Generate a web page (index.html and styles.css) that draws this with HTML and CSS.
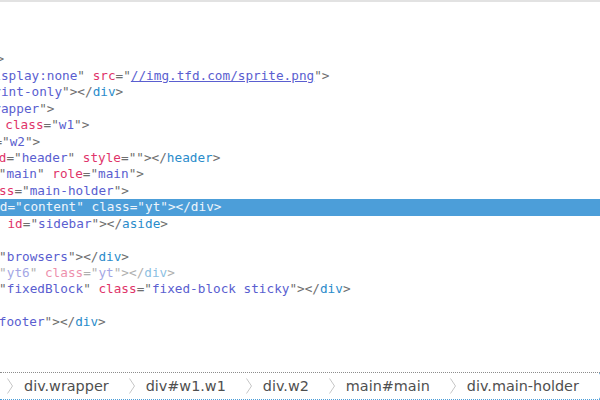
FILE: index.html
```html
<!DOCTYPE html>
<html lang="en">
<head>
    <meta charset="UTF-8">
    <meta name="viewport" content="width=device-width, initial-scale=1.0">
    <title>Inspector</title>
    <link rel="stylesheet" href="styles.css">
</head>
<body>
    <div class="inspector">
        <!-- Cây markup (đã cuộn ngang) -->
        <div class="markup">
            <div class="tree">
                <div class="line l0">&lt;!<span class="tg">DOCTYPE</span> html&gt;</div>
                <div class="line l0">&lt;<span class="tg">html</span>&gt;</div>
                <div class="line l1">&lt;<span class="tg">head</span>&gt;</div>
                <div class="line l1">&lt;<span class="tg">body</span> <span class="an">class</span>="<span class="av">x</span>"&gt;</div>
                <div class="line l2">&lt;<span class="tg">img</span> <span class="an">style</span>="<span class="av">display:none</span>" <span class="an">src</span>="<span class="av link">//img.tfd.com/sprite.png</span>"&gt;</div>
                <div class="line l2">&lt;<span class="tg">div</span> <span class="an">class</span>="<span class="av">print-only</span>"&gt;&lt;/<span class="tg">div</span>&gt;</div>
                <div class="line l2">&lt;<span class="tg">div</span> <span class="an">class</span>="<span class="av">wrapper</span>"&gt;</div>
                <div class="line l3">&lt;<span class="tg">div</span> <span class="an">id</span>="<span class="av">w1</span>" <span class="an">class</span>="<span class="av">w1</span>"&gt;</div>
                <div class="line l4">&lt;<span class="tg">div</span> <span class="an">class</span>="<span class="av">w2</span>"&gt;</div>
                <div class="line l5">&lt;<span class="tg">header</span> <span class="an">id</span>="<span class="av">header</span>" <span class="an">style</span>=""&gt;&lt;/<span class="tg">header</span>&gt;</div>
                <div class="line l5">&lt;<span class="tg">main</span> <span class="an">id</span>="<span class="av">main</span>" <span class="an">role</span>="<span class="av">main</span>"&gt;</div>
                <div class="line l6">&lt;<span class="tg">div</span> <span class="an">class</span>="<span class="av">main-holder</span>"&gt;</div>
                <div class="line l7 selected">&lt;<span class="tg">div</span> <span class="an">id</span>="<span class="av">content</span>" <span class="an">class</span>="<span class="av">yt</span>"&gt;&lt;/<span class="tg">div</span>&gt;</div>
                <div class="line l7">&lt;<span class="tg">aside</span> <span class="an">id</span>="<span class="av">sidebar</span>"&gt;&lt;/<span class="tg">aside</span>&gt;</div>
                <div class="line l6">&lt;/<span class="tg">div</span>&gt;</div>
                <div class="line l6">&lt;<span class="tg">div</span> <span class="an">id</span>="<span class="av">browsers</span>"&gt;&lt;/<span class="tg">div</span>&gt;</div>
                <div class="line l6 hidden-node">&lt;<span class="tg">div</span> <span class="an">id</span>="<span class="av">yt6</span>" <span class="an">class</span>="<span class="av">yt</span>"&gt;&lt;/<span class="tg">div</span>&gt;</div>
                <div class="line l6">&lt;<span class="tg">div</span> <span class="an">id</span>="<span class="av">fixedBlock</span>" <span class="an">class</span>="<span class="av">fixed-block sticky</span>"&gt;&lt;/<span class="tg">div</span>&gt;</div>
                <div class="line l5">&lt;/<span class="tg">main</span>&gt;</div>
                <div class="line l5">&lt;<span class="tg">div</span> <span class="an">id</span>="<span class="av">footer</span>"&gt;&lt;/<span class="tg">div</span>&gt;</div>
            </div>
        </div>
        <!-- Thanh breadcrumbs dưới cùng -->
        <nav class="crumbs">
            <div class="crumb">
                <svg class="sep" width="6" height="16" viewBox="0 0 6 16"><polyline points="0.5,0.5 5.5,8 0.5,15.5" fill="none" stroke="#c6c6c6" stroke-width="1"/></svg>
                <span>div.wrapper</span>
            </div>
            <div class="crumb">
                <svg class="sep" width="6" height="16" viewBox="0 0 6 16"><polyline points="0.5,0.5 5.5,8 0.5,15.5" fill="none" stroke="#c6c6c6" stroke-width="1"/></svg>
                <span>div#w1.w1</span>
            </div>
            <div class="crumb">
                <svg class="sep" width="6" height="16" viewBox="0 0 6 16"><polyline points="0.5,0.5 5.5,8 0.5,15.5" fill="none" stroke="#c6c6c6" stroke-width="1"/></svg>
                <span>div.w2</span>
            </div>
            <div class="crumb">
                <svg class="sep" width="6" height="16" viewBox="0 0 6 16"><polyline points="0.5,0.5 5.5,8 0.5,15.5" fill="none" stroke="#c6c6c6" stroke-width="1"/></svg>
                <span>main#main</span>
            </div>
            <div class="crumb">
                <svg class="sep" width="6" height="16" viewBox="0 0 6 16"><polyline points="0.5,0.5 5.5,8 0.5,15.5" fill="none" stroke="#c6c6c6" stroke-width="1"/></svg>
                <span>div.main-holder</span>
            </div>
            <div class="crumb current">
                <svg width="40" height="26" viewBox="0 0 40 26"><polygon points="0,0 40,0 40,26 0,26 7,13" fill="#4c9ed9"/></svg>
            </div>
        </nav>
    </div>
</body>
</html>
```
FILE: styles.css
```css
/* Thiết lập chung */
body {
    margin: 0;
    background-color: #ffffff;
    font-family: "DejaVu Sans", sans-serif;
}

.inspector {
    width: 600px;
    height: 400px;
    display: flex;
    flex-direction: column;
    overflow: hidden;
    border-top: 2px solid #e2e2e2;
    box-sizing: border-box;
}

/* Cây markup */
.markup {
    flex: 1;
    overflow: hidden;
}

.tree {
    margin-left: -130px;
    font-family: "DejaVu Sans Mono", monospace;
    font-size: 12.7px;
    line-height: 16.45px;
    color: #6e6e6e;
}

.line {
    height: 16.45px;
    white-space: pre;
}

.l0 { padding-left: 0; }
.l1 { padding-left: 12px; }
.l2 { padding-left: 24px; }
.l3 { padding-left: 36px; }
.l4 { padding-left: 48px; }
.l5 { padding-left: 60px; }
.l6 { padding-left: 68px; }
.l7 { padding-left: 84px; }

.tg { color: #2a8ccb; }
.an { color: #e0356a; }
.av { color: #5a5ed0; }
.link { text-decoration: underline; }

.hidden-node { opacity: 0.55; }

.line.selected {
    background-color: #4c9ed9;
    color: #eef5fb;
}

.line.selected span { color: #eef5fb; }

/* Breadcrumbs */
.crumbs {
    height: 28px;
    display: flex;
    align-items: center;
    padding-left: 7px;
    border-top: 1px dotted #8c8c8c;
    border-bottom: 1px dotted #4c9ed9;
    box-sizing: border-box;
    font-size: 14.4px;
    color: #4f4f4f;
    white-space: nowrap;
}

.crumb {
    display: flex;
    align-items: center;
    gap: 11px;
    padding-right: 20px;
}

.crumb.current { padding-right: 0; }
```
